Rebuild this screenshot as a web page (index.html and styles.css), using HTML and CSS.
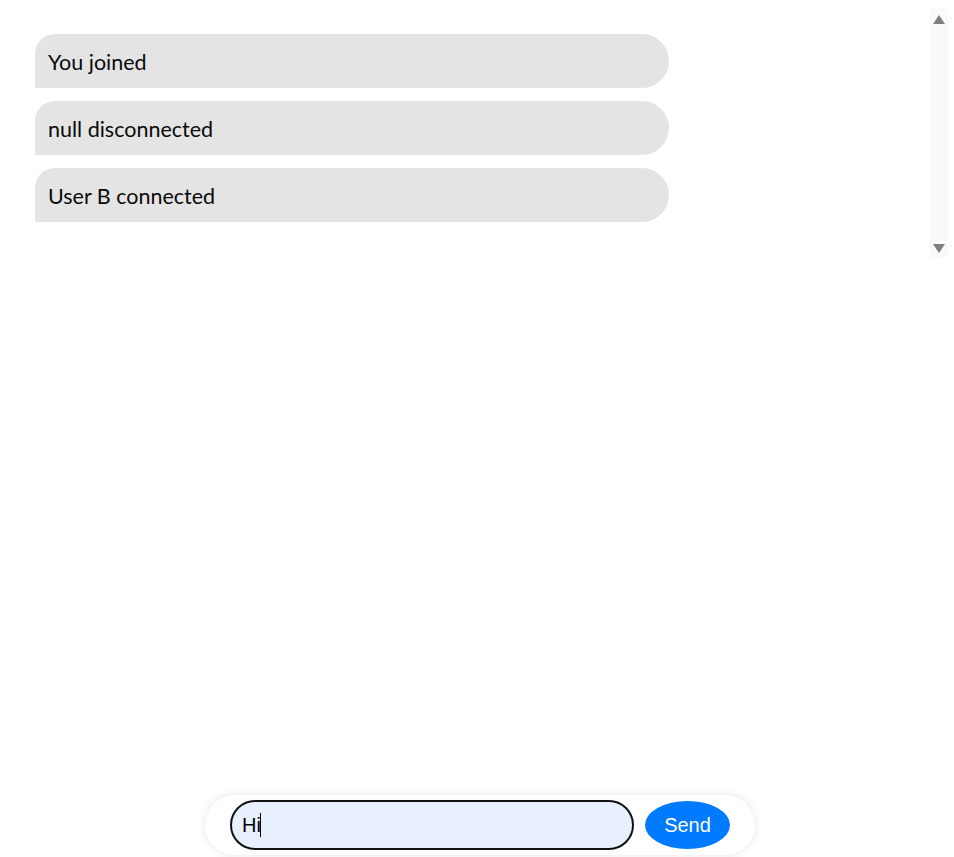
FILE: index.html
```html
<!DOCTYPE html>
<html lang="en">
<head>
<meta charset="utf-8">
<title>Chat</title>
<link rel="stylesheet" href="styles.css">
</head>
<body>
<div class="chat-box">
  <div class="chat">
    <div class="msg">You joined</div>
    <div class="msg">null disconnected</div>
    <div class="msg">User B connected</div>
  </div>
  <div class="scrollbar">
    <span class="arrow up"></span>
    <span class="arrow down"></span>
  </div>
</div>
<form class="bar">
  <div class="field-wrap">
    <input class="field" type="text" value="Hi">
    <span class="caret"></span>
  </div>
  <button class="send" type="button">Send</button>
</form>
</body>
</html>
```
FILE: styles.css
```css
html, body {
  margin: 0;
  height: 100%;
  background: #fff;
}
body {
  display: flex;
  flex-direction: column;
  font-family: "Lato", "Noto Sans", sans-serif;
}
.chat-box {
  margin: 9px 6px 0 8px;
  height: 249px;
  display: flex;
  flex: none;
}
.chat {
  flex: 1;
  overflow: hidden;
  padding: 25px 0 0 27px;
  display: flex;
  flex-direction: column;
  gap: 13px;
}
.scrollbar {
  width: 18px;
  background: #fafafa;
  display: flex;
  flex-direction: column;
  justify-content: space-between;
  align-items: center;
  padding: 6px 0 5px;
  box-sizing: border-box;
}
.arrow {
  width: 0;
  height: 0;
  border-left: 6px solid transparent;
  border-right: 6px solid transparent;
}
.arrow.up {
  border-bottom: 9px solid #808080;
}
.arrow.down {
  border-top: 9px solid #808080;
}
.msg {
  width: 634px;
  box-sizing: border-box;
  height: 54px;
  flex: none;
  display: flex;
  align-items: center;
  padding: 2px 13px 0;
  background: #e4e4e4;
  border-radius: 20px 27px 27px 0;
  font-size: 21.5px;
  color: #0a0a0a;
}
.bar {
  margin: auto 0 2px 205px;
  width: 550px;
  box-sizing: border-box;
  padding: 5px 25px;
  display: flex;
  align-items: center;
  gap: 11px;
  background: #fff;
  border-radius: 30px;
  box-shadow: 0 0 10px rgba(0, 0, 0, 0.1);
}
.field-wrap {
  position: relative;
  width: 404px;
  height: 50px;
}
.field {
  width: 100%;
  height: 100%;
  box-sizing: border-box;
  border: 2px solid #111;
  border-radius: 25px;
  background: #e8f0fe;
  padding: 0 10px;
  font-family: "Liberation Sans", Arial, sans-serif;
  font-size: 20px;
  color: #000;
  outline: none;
}
.caret {
  position: absolute;
  left: 30px;
  top: 13px;
  width: 1px;
  height: 24px;
  background: #000;
}
.send {
  width: 85px;
  height: 48px;
  border: none;
  border-radius: 50%;
  background: #007bff;
  color: #fff;
  font-family: "Liberation Sans", Arial, sans-serif;
  font-size: 20px;
  padding: 0;
}
```
